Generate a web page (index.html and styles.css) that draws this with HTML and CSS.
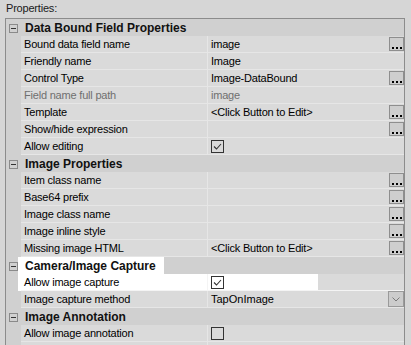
FILE: index.html
```html
<!DOCTYPE html>
<html lang="en">
<head>
    <meta charset="UTF-8">
    <title>Properties</title>
    <link rel="stylesheet" href="styles.css">
</head>
<body>
    <div class="caption">Properties:</div>
    <div class="grid">
        <div class="cat"><span class="toggle"></span><span>Data Bound Field Properties</span></div>
        <div class="row"><div class="gut"></div><div class="name">Bound data field name</div><div class="value"><span>image</span><span class="more"><i></i><i></i><i></i></span></div></div>
        <div class="row"><div class="gut"></div><div class="name">Friendly name</div><div class="value"><span>Image</span></div></div>
        <div class="row"><div class="gut"></div><div class="name">Control Type</div><div class="value"><span>Image-DataBound</span><span class="more"><i></i><i></i><i></i></span></div></div>
        <div class="row off"><div class="gut"></div><div class="name">Field name full path</div><div class="value"><span>image</span></div></div>
        <div class="row"><div class="gut"></div><div class="name">Template</div><div class="value"><span>&lt;Click Button to Edit&gt;</span><span class="more"><i></i><i></i><i></i></span></div></div>
        <div class="row"><div class="gut"></div><div class="name">Show/hide expression</div><div class="value"><span></span><span class="more"><i></i><i></i><i></i></span></div></div>
        <div class="row"><div class="gut"></div><div class="name">Allow editing</div><div class="value"><span class="check"><svg width="11" height="11" viewBox="0 0 11 11"><polyline points="2,5.5 4.5,8 9,3" fill="none" stroke="#333" stroke-width="1.1"/></svg></span></div></div>

        <div class="cat"><span class="toggle"></span><span>Image Properties</span></div>
        <div class="row"><div class="gut"></div><div class="name">Item class name</div><div class="value"><span></span><span class="more"><i></i><i></i><i></i></span></div></div>
        <div class="row"><div class="gut"></div><div class="name">Base64 prefix</div><div class="value"><span></span><span class="more"><i></i><i></i><i></i></span></div></div>
        <div class="row"><div class="gut"></div><div class="name">Image class name</div><div class="value"><span></span><span class="more"><i></i><i></i><i></i></span></div></div>
        <div class="row"><div class="gut"></div><div class="name">Image inline style</div><div class="value"><span></span><span class="more"><i></i><i></i><i></i></span></div></div>
        <div class="row"><div class="gut"></div><div class="name">Missing image HTML</div><div class="value"><span>&lt;Click Button to Edit&gt;</span><span class="more"><i></i><i></i><i></i></span></div></div>

        <div class="cat hl"><span class="toggle"></span><span>Camera/Image Capture</span></div>
        <div class="row hl"><div class="gut"></div><div class="name">Allow image capture</div><div class="value"><span class="check"><svg width="11" height="11" viewBox="0 0 11 11"><polyline points="2,5.5 4.5,8 9,3" fill="none" stroke="#333" stroke-width="1.1"/></svg></span></div></div>
        <div class="row"><div class="gut"></div><div class="name">Image capture method</div><div class="value"><span class="big">TapOnImage</span><span class="drop"><svg width="14" height="14" viewBox="0 0 14 14"><polyline points="3.5,5.5 7,9 10.5,5.5" fill="none" stroke="#7a7a7a" stroke-width="1"/></svg></span></div></div>

        <div class="cat"><span class="toggle"></span><span>Image Annotation</span></div>
        <div class="row"><div class="gut"></div><div class="name">Allow image annotation</div><div class="value"><span class="check"></span></div></div>
        <div class="row"><div class="gut"></div><div class="name"></div><div class="value"></div></div>
    </div>
</body>
</html>
```

FILE: styles.css
```css
* {
    margin: 0;
    padding: 0;
    box-sizing: border-box;
}
body {
    background-color: #d6d6d6;
    font-family: "Liberation Sans", Arial, sans-serif;
    font-size: 11px;
    letter-spacing: -0.2px;
    color: #000;
    height: 345px;
    overflow: hidden;
}
.caption {
    height: 18px;
    line-height: 17px;
    padding-left: 6px;
    color: #1a1a1a;
}
.grid {
    margin-left: 5px;
    width: 400px;
    border: 1px solid #8c8c8c;
    border-bottom: 0;
    background-color: #d0d0d0;
}
.cat {
    display: flex;
    align-items: center;
    height: 17px;
    font-size: 12px;
    font-weight: bold;
    letter-spacing: 0;
    color: #111;
}
.cat.hl {
    background: linear-gradient(to right, transparent 12px, #fff 12px 158px, transparent 158px);
}
.toggle {
    position: relative;
    width: 9px;
    height: 9px;
    border: 1px solid #8a8a8a;
    margin: 1px 7px 0 3px;
}
.toggle::after {
    content: "";
    position: absolute;
    left: 1px;
    top: 3px;
    width: 5px;
    height: 1px;
    background-color: #333;
}
.row {
    display: grid;
    grid-template-columns: 15px 187px 1fr;
    height: 17px;
}
.name, .value {
    background-color: #dadada;
    border-bottom: 1px solid #e6e6e6;
    padding-left: 3px;
    line-height: 16px;
    white-space: nowrap;
    overflow: hidden;
}
.name {
    border-right: 1px solid #e6e6e6;
}
.value {
    display: flex;
    justify-content: space-between;
    align-items: flex-start;
}
.off .name, .off .value {
    color: #6f6f6f;
}
.row.hl {
    background: linear-gradient(to right, #d0d0d0 12px, #fff 12px 312px, #dadada 312px);
}
.row.hl .name, .row.hl .value {
    background: transparent;
    border-color: #f4f4f4;
}
.more {
    display: flex;
    align-items: flex-end;
    gap: 2px;
    width: 15px;
    height: 14px;
    margin-top: 1px;
    padding: 0 0 1px 2px;
    border: 1px solid #8e8e8e;
    background-color: #cecece;
}
.more i {
    width: 2px;
    height: 2px;
    background-color: #000;
}
.check {
    display: block;
    width: 13px;
    height: 13px;
    margin-top: 2px;
    border: 1px solid #333;
}
.check svg {
    display: block;
}
.big {
    font-size: 11px;
    letter-spacing: 0;
}
.drop {
    display: block;
    width: 16px;
    height: 16px;
    border: 1px solid #9a9a9a;
    background-color: #cccccc;
}
.drop svg {
    display: block;
}
```
